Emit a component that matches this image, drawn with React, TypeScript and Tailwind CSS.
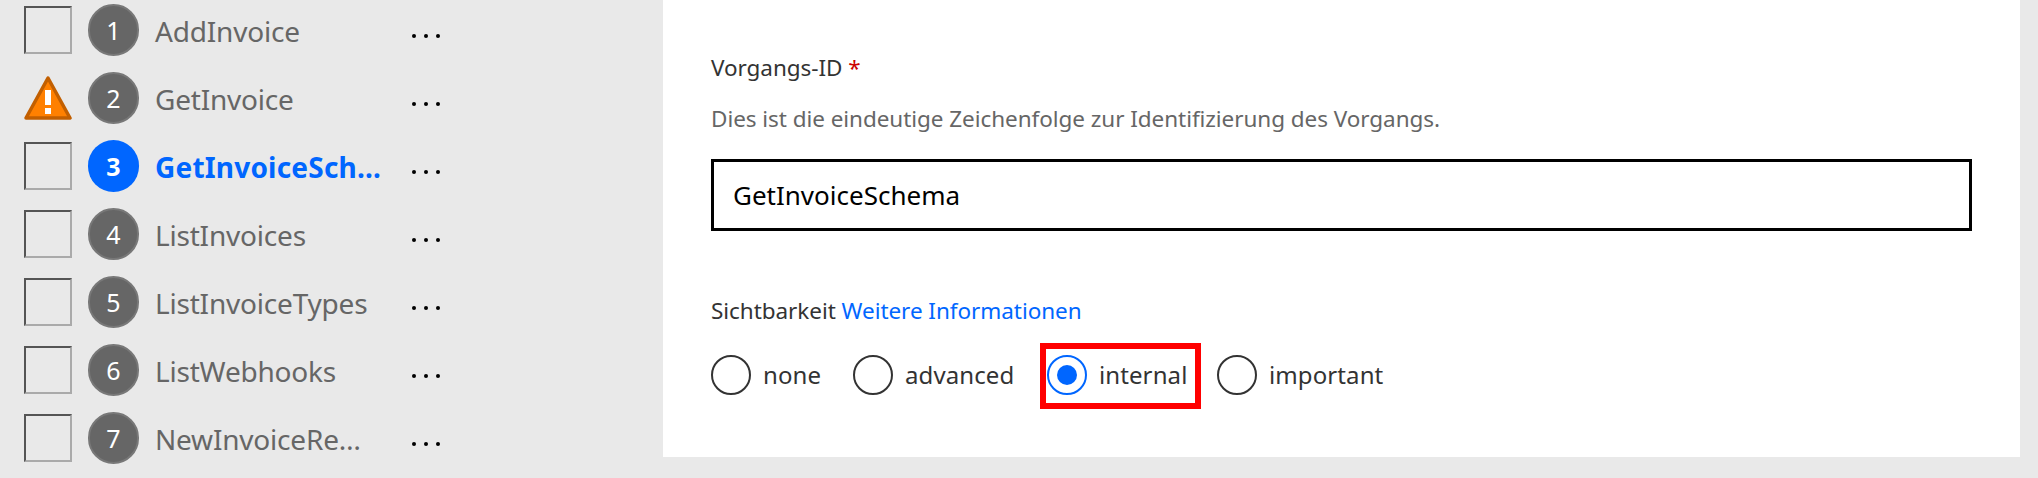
import React from 'react';

const steps = [
  { n: 1, name: 'AddInvoice' },
  { n: 2, name: 'GetInvoice', warning: true },
  { n: 3, name: 'GetInvoiceSch…', active: true },
  { n: 4, name: 'ListInvoices' },
  { n: 5, name: 'ListInvoiceTypes' },
  { n: 6, name: 'ListWebhooks' },
  { n: 7, name: 'NewInvoiceRe…' },
];

const WarningIcon = () => (
  <svg width="48" height="46" viewBox="0 0 48 46" className="shrink-0">
    <path d="M24 3 L46 43 H2 Z" fill="#ff8000" stroke="#c25f00" strokeWidth="3.5" strokeLinejoin="round" />
    <rect x="21" y="15" width="6" height="15" fill="#fff" />
    <rect x="21" y="33" width="6" height="6" fill="#fff" />
  </svg>
);

const Step = ({ n, name, warning, active }: { n: number; name: string; warning?: boolean; active?: boolean }) => (
  <div className="flex h-[52px] items-center">
    <div className="flex w-[48px] justify-center">
      {warning ? (
        <WarningIcon />
      ) : (
        <div className="h-[48px] w-[48px] border-2 border-t-[#555555] border-l-[#555555] border-r-[#aaaaaa] border-b-[#aaaaaa]" />
      )}
    </div>
    <div
      className={`ml-[16px] flex h-[52px] w-[51px] shrink-0 items-center justify-center rounded-full pt-[1px] text-[25px] text-white ${
        active ? 'bg-[#0066ff] font-bold' : 'border-2 border-[#787878] bg-[#666666]'
      }`}
    >
      {n}
    </div>
    <span
      className={`ml-[16px] w-[257px] whitespace-nowrap pt-[1px] text-[28px] ${
        active ? 'font-bold tracking-[0.2px] text-[#0066ff]' : 'tracking-[-0.2px] text-[#666666]'
      }`}
    >
      {name}
    </span>
    <div className="flex gap-[8px] pt-[12px]">
      <span className="h-[4px] w-[4px] rounded-full bg-black" />
      <span className="h-[4px] w-[4px] rounded-full bg-black" />
      <span className="h-[4px] w-[4px] rounded-full bg-black" />
    </div>
  </div>
);

const Radio = ({ label, checked, marked, className }: { label: string; checked?: boolean; marked?: boolean; className?: string }) => (
  <div className={`relative flex items-center ${className ?? ''}`}>
    <div
      className={`flex h-[40px] w-[40px] items-center justify-center rounded-full border-2 ${
        checked ? 'border-[#0066ff]' : 'border-[#333333]'
      }`}
    >
      {checked && <div className="h-[20px] w-[20px] rounded-full bg-[#0066ff]" />}
    </div>
    <span className="ml-[12px] text-[24px] tracking-[0.1px] text-[#333333]">{label}</span>
    {marked && <div className="absolute -top-[12px] -bottom-[14px] -left-[7px] right-[16px] border-[6px] border-[#ff0000]" />}
  </div>
);

export default function App() {
  return (
    <div className="flex h-[478px] w-[2038px] overflow-hidden bg-[#e9e9e9] font-['Noto_Sans',sans-serif]">
      <div className="flex w-[663px] shrink-0 flex-col gap-[16px] pl-[24px] pt-[4px]">
        {steps.map((s) => (
          <Step key={s.n} {...s} />
        ))}
      </div>
      <div className="h-[457px] w-[1357px] bg-white px-[48px] pt-[52px]">
        <div className="text-[22.5px] leading-[32px] tracking-[-0.05px] text-[#333333]">
          Vorgangs-ID <span className="text-[#cc0000]">*</span>
        </div>
        <p className="mt-[19px] text-[22.5px] leading-[32px] tracking-[-0.05px] text-[#666666]">
          Dies ist die eindeutige Zeichenfolge zur Identifizierung des Vorgangs.
        </p>
        <input
          readOnly
          value="GetInvoiceSchema"
          className="mt-[24px] block h-[72px] w-[1261px] border-[3px] border-black px-[19px] text-[26px] text-black outline-none"
        />
        <div className="mt-[64px] text-[22.5px] leading-[32px] tracking-[-0.05px] text-[#333333]">
          Sichtbarkeit <span className="text-[#0066ff]">Weitere Informationen</span>
        </div>
        <div className="mt-[28px] flex h-[40px] items-center">
          <Radio label="none" className="w-[142px]" />
          <Radio label="advanced" className="w-[194px]" />
          <Radio label="internal" checked marked className="w-[170px]" />
          <Radio label="important" />
        </div>
      </div>
    </div>
  );
}
